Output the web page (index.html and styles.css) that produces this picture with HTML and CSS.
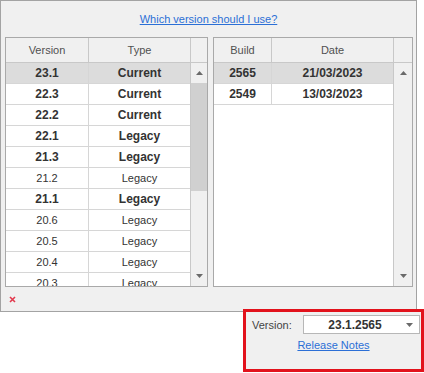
FILE: index.html
```html
<!DOCTYPE html>
<html lang="en">
<head>
    <meta charset="UTF-8">
    <meta name="viewport" content="width=device-width, initial-scale=1.0">
    <title>Versions</title>
    <link rel="stylesheet" href="styles.css">
</head>
<body>
    <div class="panel">
        <div class="help"><a href="#">Which version should I use?</a></div>

        <div class="grids">
            <div class="grid grid-versions">
                <div class="grid-data">
                    <div class="row head">
                        <div class="cell">Version</div>
                        <div class="cell">Type</div>
                    </div>
                    <div class="grid-body">
                        <div class="row selected bold"><div class="cell">23.1</div><div class="cell">Current</div></div>
                        <div class="row bold"><div class="cell">22.3</div><div class="cell">Current</div></div>
                        <div class="row bold"><div class="cell">22.2</div><div class="cell">Current</div></div>
                        <div class="row bold"><div class="cell">22.1</div><div class="cell">Legacy</div></div>
                        <div class="row bold"><div class="cell">21.3</div><div class="cell">Legacy</div></div>
                        <div class="row"><div class="cell">21.2</div><div class="cell">Legacy</div></div>
                        <div class="row bold"><div class="cell">21.1</div><div class="cell">Legacy</div></div>
                        <div class="row"><div class="cell">20.6</div><div class="cell">Legacy</div></div>
                        <div class="row"><div class="cell">20.5</div><div class="cell">Legacy</div></div>
                        <div class="row"><div class="cell">20.4</div><div class="cell">Legacy</div></div>
                        <div class="row"><div class="cell">20.3</div><div class="cell">Legacy</div></div>
                    </div>
                </div>
                <div class="vscroll">
                    <div class="vs-head"></div>
                    <div class="vs-btn">
                        <svg width="7" height="4" viewBox="0 0 7 4"><polygon points="3.5,0 7,4 0,4" fill="#6a6a6a"/></svg>
                    </div>
                    <div class="vs-track">
                        <div class="vs-thumb"></div>
                    </div>
                    <div class="vs-btn">
                        <svg width="7" height="4" viewBox="0 0 7 4"><polygon points="0,0 7,0 3.5,4" fill="#6a6a6a"/></svg>
                    </div>
                </div>
            </div>

            <div class="grid grid-builds">
                <div class="grid-data">
                    <div class="row head">
                        <div class="cell">Build</div>
                        <div class="cell">Date</div>
                    </div>
                    <div class="grid-body">
                        <div class="row selected bold"><div class="cell">2565</div><div class="cell">21/03/2023</div></div>
                        <div class="row bold"><div class="cell">2549</div><div class="cell">13/03/2023</div></div>
                    </div>
                </div>
                <div class="vscroll">
                    <div class="vs-head"></div>
                    <div class="vs-btn">
                        <svg width="7" height="4" viewBox="0 0 7 4"><polygon points="3.5,0 7,4 0,4" fill="#6a6a6a"/></svg>
                    </div>
                    <div class="vs-track"></div>
                    <div class="vs-btn">
                        <svg width="7" height="4" viewBox="0 0 7 4"><polygon points="0,0 7,0 3.5,4" fill="#6a6a6a"/></svg>
                    </div>
                </div>
            </div>
        </div>

        <div class="status">
            <svg width="7" height="7" viewBox="0 0 7 7"><path d="M1 1 L6 6 M6 1 L1 6" stroke="#e2394d" stroke-width="1.6"/></svg>
        </div>
    </div>

    <div class="footer">
        <div class="highlight">
            <div class="pick">
                <span class="pick-label">Version:</span>
                <div class="combo">
                    <span class="combo-text">23.1.2565</span>
                    <svg width="7" height="4" viewBox="0 0 7 4"><polygon points="0,0 7,0 3.5,4" fill="#6a6a6a"/></svg>
                </div>
            </div>
            <a href="#" class="notes">Release Notes</a>
        </div>
    </div>
</body>
</html>
```

FILE: styles.css
```css
body {
    margin: 0;
    background: #fff;
    font-family: "Liberation Sans", Arial, sans-serif;
    font-size: 11px;
    color: #333;
}
a {
    color: #2b6fd6;
}
.panel {
    width: 417px;
    height: 312px;
    box-sizing: border-box;
    border: 1px solid #a3a3a3;
    background: #f0f0f0;
}
.help {
    height: 36px;
    display: flex;
    align-items: center;
    justify-content: center;
}
.grids {
    display: flex;
    gap: 5px;
    padding: 0 3px 0 4px;
}
.grid {
    display: flex;
    height: 250px;
    box-sizing: border-box;
    border: 1px solid #a9a9a9;
    background: #fff;
}
.grid-versions {
    width: 203px;
}
.grid-builds {
    width: 200px;
}
.grid-data {
    flex: 1;
    overflow: hidden;
}
.grid-versions .row {
    grid-template-columns: 83px 1fr;
}
.grid-builds .row {
    grid-template-columns: 58px 1fr;
}
.row {
    display: grid;
    height: 21px;
    box-sizing: border-box;
    border-bottom: 1px solid #d6d6d6;
}
.row .cell {
    display: flex;
    align-items: center;
    justify-content: center;
}
.row .cell:first-child {
    border-right: 1px solid #d6d6d6;
}
.row.head {
    height: 25px;
    background: #f0f0f0;
    color: #505050;
    border-bottom-color: #c8c8c8;
}
.row.head .cell:first-child {
    border-right-color: #c8c8c8;
}
.row.bold {
    font-weight: bold;
    font-size: 12px;
}
.row.selected {
    background: #dcdcdc;
}
.grid-body {
    height: 223px;
    overflow: hidden;
}
.vscroll {
    width: 16px;
    display: flex;
    flex-direction: column;
    border-left: 1px solid #c8c8c8;
    background: #f0f0f0;
}
.grid-builds .vscroll {
    width: 18px;
}
.vs-head {
    height: 25px;
    box-sizing: border-box;
    border-bottom: 1px solid #c8c8c8;
}
.vs-btn {
    height: 20px;
    display: flex;
    align-items: center;
    justify-content: center;
}
.vs-track {
    flex: 1;
}
.vs-thumb {
    height: 108px;
    background: #d0d0d0;
}
.status {
    padding: 9px 0 0 8px;
    line-height: 0;
}
.footer {
    display: flex;
    justify-content: flex-end;
    margin-top: -3px;
}
.highlight {
    width: 181px;
    height: 63px;
    box-sizing: border-box;
    border: 3px solid #e2121c;
    background: #f0f0f0;
    display: flex;
    flex-direction: column;
    align-items: center;
}
.pick {
    display: flex;
    align-items: center;
    align-self: stretch;
    margin-top: 3px;
    padding-left: 6px;
}
.pick-label {
    width: 51px;
    color: #444;
}
.combo {
    width: 117px;
    height: 19px;
    box-sizing: border-box;
    border: 1px solid #b7b7b7;
    background: #fff;
    display: flex;
    align-items: center;
    padding-right: 6px;
}
.combo-text {
    flex: 1;
    text-align: center;
    font-weight: bold;
    font-size: 12px;
}
.notes {
    margin-top: 5px;
}
```
